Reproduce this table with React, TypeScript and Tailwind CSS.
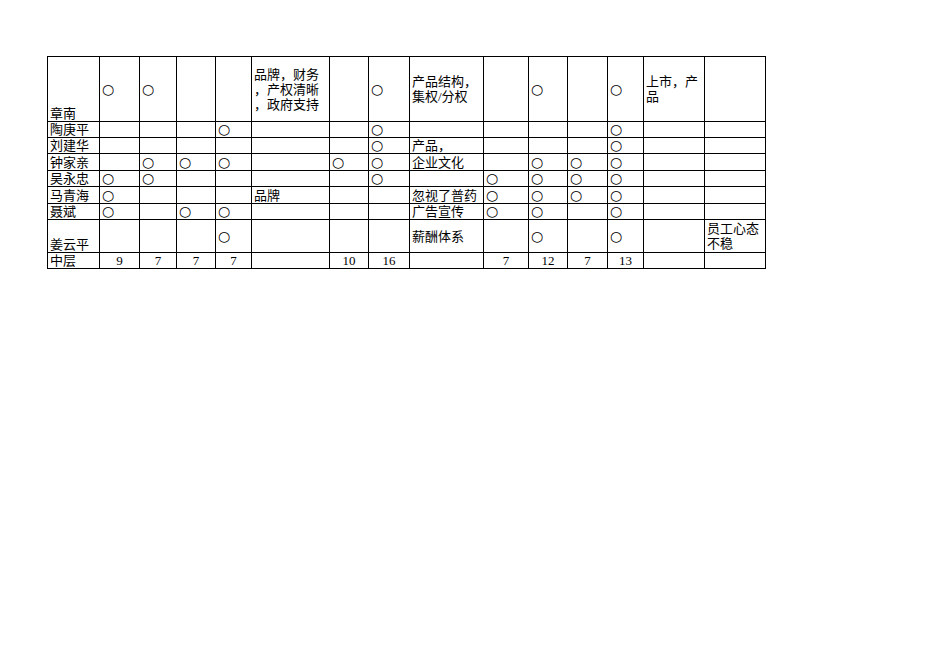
import React from 'react'

const O = '○'

// column widths in px, first column is the names
const colClasses = [
  'w-[52px]', 'w-[40px]', 'w-[37px]', 'w-[39px]', 'w-[36px]', 'w-[78px]', 'w-[39px]', 'w-[41px]',
  'w-[74px]', 'w-[45px]', 'w-[39px]', 'w-[40px]', 'w-[36px]', 'w-[61px]', 'w-[61px]',
]

type Cell = string | string[] | null

type Row = { name: string; h: string; cells: Cell[] }

const rows: Row[] = [
  {
    name: '章南',
    h: 'h-[65px]',
    cells: [O, O, null, null, ['品牌，财务', '，产权清晰', '，政府支持'], null, O, ['产品结构，', '集权/分权'], null, O, null, O, ['上市，产', '品'], null],
  },
  { name: '陶庚平', h: 'h-[16px]', cells: [null, null, null, O, null, null, O, null, null, null, null, O, null, null] },
  { name: '刘建华', h: 'h-[16px]', cells: [null, null, null, null, null, null, O, '产品，', null, null, null, O, null, null] },
  { name: '钟家亲', h: 'h-[17px]', cells: [null, O, O, O, null, O, O, '企业文化', null, O, O, O, null, null] },
  { name: '吴永忠', h: 'h-[16px]', cells: [O, O, null, null, null, null, O, null, O, O, O, O, null, null] },
  { name: '马青海', h: 'h-[17px]', cells: [O, null, null, null, '品牌', null, null, '忽视了普药', O, O, O, O, null, null] },
  { name: '聂斌', h: 'h-[15px]', cells: [O, null, O, O, null, null, null, '广告宣传', O, O, null, O, null, null] },
  { name: '姜云平', h: 'h-[33px]', cells: [null, null, null, O, null, null, null, '薪酬体系', null, O, null, O, null, ['员工心态', '不稳']] },
]

const totals: (string | null)[] = ['9', '7', '7', '7', null, '10', '16', null, '7', '12', '7', '13', null, null]

function renderCell(c: Cell) {
  if (c === null) return null
  if (c === O) {
    // the circle mark, kept to one line box so the row does not grow
    return (
      <span className="inline-block h-[15px] align-top font-['DejaVu_Sans',sans-serif] text-[14px] leading-[15px]">
        {O}
      </span>
    )
  }
  if (Array.isArray(c)) {
    return c.map((line, i) => (
      <div key={i} className="whitespace-nowrap">
        {line}
      </div>
    ))
  }
  return <span className="whitespace-nowrap">{c}</span>
}

export default function App() {
  return (
    <div
      className="w-[950px] h-[672px] bg-white pt-[56px] pl-[47px] text-black"
      style={{ fontFamily: '"Liberation Serif", "Noto Sans CJK SC", serif' }}
    >
      <table className="table-fixed border-collapse w-[719px] text-[13px] leading-[15px]">
        <colgroup>
          {colClasses.map((c, i) => (
            <col key={i} className={c} />
          ))}
        </colgroup>
        <tbody>
          {rows.map((r) => (
            <tr key={r.name} className={r.h}>
              <td className="border border-black px-[2px] py-0 align-bottom whitespace-nowrap">{r.name}</td>
              {r.cells.map((c, i) => (
                <td key={i} className="border border-black px-[2px] py-0 align-middle">
                  {renderCell(c)}
                </td>
              ))}
            </tr>
          ))}
          <tr className="h-[16px]">
            <td className="border border-black px-[2px] py-0 align-bottom">中层</td>
            {totals.map((t, i) => (
              <td key={i} className="border border-black px-[2px] py-0 text-center align-bottom">
                {t}
              </td>
            ))}
          </tr>
        </tbody>
      </table>
    </div>
  )
}
